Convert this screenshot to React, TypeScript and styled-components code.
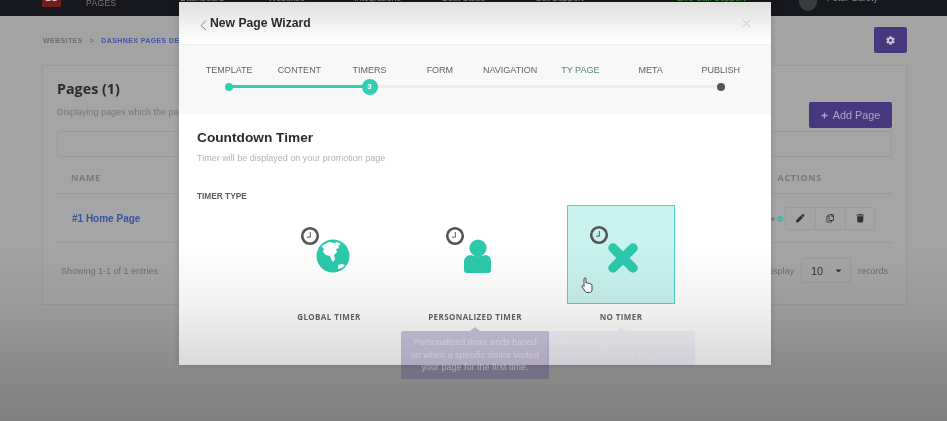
import React from "react";
import styled, { createGlobalStyle } from "styled-components";
import { FaPen, FaTrash, FaCog, FaRegCopy, FaEye, FaCheckCircle, FaCaretDown, FaPlus } from "react-icons/fa";

const Global = createGlobalStyle`
  html, body { margin: 0; padding: 0; background: #8a8a8a; }
  * { box-sizing: border-box; }
`;

const Frame = styled.div`
  position: relative;
  width: 947px;
  height: 421px;
  overflow: hidden;
  background: #a3a3a3;
  font-family: "Liberation Sans", Arial, sans-serif;
  filter: blur(0.45px);
`;

const TopBar = styled.header`
  height: 16px;
  background: #16181d;
  overflow: hidden;
  color: #8b8d92;
  font-size: 9px;
`;
const TopInner = styled.div`
  display: flex;
  align-items: flex-start;
  height: 24px;
  margin-top: -7px;
  padding-left: 42px;
`;
const LogoMark = styled.div`
  width: 19px;
  height: 14px;
  background: #6f1d1d;
  border-radius: 1px;
  color: #d8c8c8;
  font-size: 9px;
  font-weight: 700;
  line-height: 10px;
  text-align: center;
`;
const LogoWord = styled.div`
  margin-left: 25px;
  margin-top: 5px;
  width: 94px;
  font-size: 8.5px;
  line-height: 10px;
  color: #777;
  letter-spacing: 0.4px;
`;
const NavItem = styled.span<{ $w: number; $green?: boolean }>`
  width: ${(p) => p.$w}px;
  line-height: 10px;
  white-space: nowrap;
  color: ${(p) => (p.$green ? "#3f9c3c" : "#8b8d92")};
`;
const Avatar = styled.div`
  width: 18px;
  height: 18px;
  margin-left: 24px;
  border-radius: 50%;
  background: #3a3c40;
`;
const UserName = styled.span`
  margin-left: 10px;
  line-height: 10px;
`;

const CrumbRow = styled.div`
  height: 49px;
  padding: 11px 40px 0 43px;
  display: flex;
  align-items: flex-start;
  justify-content: space-between;
`;
const Crumbs = styled.div`
  margin-top: 9px;
  font-size: 7px;
  line-height: 10px;
  font-weight: 700;
  letter-spacing: 0.4px;
  color: #6f6f6f;
  display: flex;
  gap: 7px;
`;
const CrumbLink = styled.span`
  color: #3f57a6;
`;
const GearButton = styled.div`
  width: 33px;
  height: 26px;
  border-radius: 2px;
  background: #46377f;
  color: #c9c6d8;
  font-size: 9px;
  display: flex;
  align-items: center;
  justify-content: center;
`;

const Card = styled.section`
  margin: 0 40px 0 42px;
  height: 240px;
  padding: 13px 14px 0;
  background: #a5a5a5;
  border: 1px solid #9b9b9b;
`;
const CardTop = styled.div`
  display: flex;
  justify-content: space-between;
  height: 49px;
`;
const PageTitle = styled.h2`
  margin: 0;
  font-family: "Open Sans", sans-serif;
  font-size: 14.3px;
  line-height: 20px;
  font-weight: 700;
  color: #2b2b2b;
`;
const PageSub = styled.p`
  margin: 7px 0 0;
  font-size: 9px;
  line-height: 12px;
  color: #787878;
`;
const AddButton = styled.div`
  margin-top: 23px;
  width: 83px;
  height: 26px;
  border-radius: 2px;
  background: #46377f;
  color: #a9a4c6;
  font-size: 10.8px;
  display: flex;
  align-items: center;
  justify-content: center;
  gap: 5px;
`;
const SearchBox = styled.div`
  margin-top: 3px;
  height: 26px;
  border: 1px solid #9b9b9b;
  border-radius: 2px;
`;
const TableHead = styled.div`
  height: 37px;
  padding: 14px 70px 0 14px;
  display: flex;
  justify-content: space-between;
  border-bottom: 1px solid #9a9a9a;
  font-family: "Open Sans", sans-serif;
  font-size: 9px;
  line-height: 14px;
  font-weight: 700;
  letter-spacing: 0.7px;
  color: #797979;
`;
const TableRow = styled.div`
  height: 49px;
  padding: 1px 17px 0 15px;
  display: flex;
  align-items: center;
  justify-content: space-between;
  border-bottom: 1px solid #9a9a9a;
`;
const RowLink = styled.span`
  font-size: 10px;
  font-weight: 700;
  color: #3b53a4;
`;
const RowActions = styled.div`
  display: flex;
  align-items: center;
`;
const Status = styled.div`
  display: flex;
  gap: 2px;
  margin-right: 2px;
  font-size: 6px;
  color: #777;
`;
const ActionGroup = styled.div`
  display: flex;
  border: 1px solid #9b9b9b;
  border-radius: 2px;
`;
const ActionCell = styled.div`
  width: 29.500px;
  height: 21px;
  font-size: 8.5px;
  color: #333;
  display: flex;
  align-items: center;
  justify-content: center;
  & + & { border-left: 1px solid #9b9b9b; }
`;
const TableFoot = styled.div`
  padding: 15px 4px 0;
  display: flex;
  align-items: center;
  justify-content: space-between;
  font-size: 9px;
  color: #717171;
`;
const Pager = styled.div`
  display: flex;
  align-items: center;
  gap: 7px;
`;
const SelectBox = styled.div`
  width: 50px;
  height: 25px;
  padding: 0 7px 0 9px;
  border: 1px solid #9b9b9b;
  border-radius: 2px;
  display: flex;
  align-items: center;
  justify-content: space-between;
  font-size: 11px;
  color: #333;
`;

const Modal = styled.div`
  position: absolute;
  left: 179px;
  top: 2px;
  width: 592px;
  height: 363px;
  background: #fff;
  box-shadow: 0 0 6px rgba(0, 0, 0, 0.18);
`;
const ModalHead = styled.div`
  height: 43px;
  padding: 0 20px;
  display: flex;
  align-items: center;
  justify-content: space-between;
  background: linear-gradient(#e0e0e0, #fbfbfb 85%, #fff);
  border-bottom: 1px solid #f1f1f1;
`;
const HeadLeft = styled.div`
  display: flex;
  align-items: center;
  gap: 2px;
`;
const BackIcon = styled.svg`
  margin-top: 4px;
`;
const ModalTitle = styled.h1`
  margin: 0;
  font-size: 12.2px;
  line-height: 16px;
  font-weight: 700;
  color: #2a2a2a;
`;
const StepsPanel = styled.div`
  height: 69px;
  padding: 19px 15px 0;
  background: #f8f8f8;
`;
const StepLabels = styled.div`
  display: grid;
  grid-template-columns: repeat(8, 1fr);
`;
const StepLabel = styled.span<{ $accent?: boolean }>`
  text-align: center;
  font-size: 9px;
  line-height: 12px;
  white-space: nowrap;
  color: ${(p) => (p.$accent ? "#4d8a80" : "#636363")};
`;
const Rail = styled.div<{ $pct: number }>`
  margin: 9px 35px 0;
  height: 3px;
  border-radius: 2px;
  display: flex;
  align-items: center;
  justify-content: space-between;
  background: linear-gradient(
    to right,
    #2fcfb4 ${(p) => p.$pct}%,
    #ececec ${(p) => p.$pct}%
  );
`;
const RailSlot = styled.div`
  width: 0;
  height: 0;
  display: flex;
  align-items: center;
  justify-content: center;
`;
const Dot = styled.div<{ $dark?: boolean }>`
  flex: none;
  width: 8px;
  height: 8px;
  border-radius: 50%;
  background: ${(p) => (p.$dark ? "#555" : "#2fcfb4")};
`;
const CurrentDot = styled.div`
  flex: none;
  width: 16px;
  height: 16px;
  border-radius: 50%;
  background: #2fcfb4;
  color: #fff;
  font-size: 8px;
  font-weight: 700;
  display: flex;
  align-items: center;
  justify-content: center;
`;
const ModalBody = styled.div`
  padding: 15px 18px 0;
`;
const SectionTitle = styled.h2`
  margin: 0;
  font-size: 13.7px;
  line-height: 18px;
  font-weight: 700;
  color: #2a2a2a;
`;
const SectionSub = styled.p`
  margin: 5px 0 0;
  font-size: 9px;
  line-height: 12px;
  color: #b2b2b2;
`;
const FieldLabel = styled.div`
  margin-top: 26px;
  font-size: 8.3px;
  line-height: 12px;
  font-weight: 700;
  color: #5c5c5c;
`;
const Options = styled.div`
  margin-top: 3px;
  display: flex;
  justify-content: center;
  gap: 38px;
`;
const Option = styled.div`
  position: relative;
  width: 108px;
`;
const Tile = styled.div<{ $active?: boolean }>`
  height: 99px;
  background: ${(p) => (p.$active ? "#c9f2ee" : "transparent")};
  border: 1px solid ${(p) => (p.$active ? "#4fd6bf" : "transparent")};
  svg { display: block; margin: -1px; }
`;
const OptionLabel = styled.div`
  margin-top: 7px;
  text-align: center;
  font-family: "Open Sans", sans-serif;
  font-size: 8px;
  line-height: 12px;
  font-weight: 700;
  letter-spacing: 0.4px;
  white-space: nowrap;
  color: #666;
`;
const Tooltip = styled.div<{ $faint?: boolean }>`
  position: absolute;
  left: -20px;
  top: 126px;
  width: 148px;
  height: ${(p) => (p.$faint ? 36 : 48)}px;
  padding: 5px 7.500px;
  border-radius: 2px;
  text-align: center;
  font-size: 9px;
  line-height: 12.5px;
  background: ${(p) => (p.$faint ? "rgba(120,100,190,0.08)" : "rgba(80,60,150,0.29)")};
  color: ${(p) => (p.$faint ? "rgba(255,255,255,0.5)" : "rgba(255,255,255,0.55)")};
  &::before {
    content: "";
    position: absolute;
    left: 69px;
    top: -4px;
    border: 5px solid transparent;
    border-top: 0;
    border-bottom: 4px solid ${(p) => (p.$faint ? "rgba(120,100,190,0.08)" : "rgba(80,60,150,0.29)")};
  }
`;
const Vignette = styled.div`
  position: absolute;
  inset: 0;
  pointer-events: none;
  background: linear-gradient(
    rgba(0, 0, 0, 0) 0,
    rgba(0, 0, 0, 0) 58%,
    rgba(0, 0, 0, 0.05) 72%,
    rgba(0, 0, 0, 0.15) 87%,
    rgba(0, 0, 0, 0.22) 100%
  );
`;

const Clock = ({ cx, cy }: { cx: number; cy: number }) => (
  <g>
    <circle cx={cx} cy={cy} r={7.8} fill="none" stroke="#555" strokeWidth={2.6} />
    <path d={`M${cx + 0.3} ${cy - 4}V${cy + 1.2}H${cx - 3}`} fill="none" stroke="#555" strokeWidth={1} />
  </g>
);

const TEAL = "#2cc9ac";

const GlobeIcon = () => (
  <svg width="108" height="99" viewBox="0 0 108 99">
    <Clock cx={35} cy={31} />
    <circle cx={58} cy={51} r={16.5} fill={TEAL} />
    <path
      d="M50 39l4-2 5 1 3-1 4 2-3 2 1 2-3 1 1 3-3 3 1 4-2 3-2-3-1-3-4-1-3-3 1-3-2-2 1-2z"
      fill="#fff"
    />
    <path d="M63 60l4-1 3 1-3 3-4 1z" fill="#fff" />
  </svg>
);

const PersonIcon = () => (
  <svg width="108" height="99" viewBox="0 0 108 99">
    <Clock cx={34} cy={31} />
    <circle cx={57} cy={43} r={8.6} fill={TEAL} />
    <path
      d="M43 57c0-4 3-7 7-7 2 1.500 12 1.500 14 0 4 0 6 3 6 7v8c0 2-1 3-3 3H46c-2 0-3-1-3-3z"
      fill={TEAL}
    />
  </svg>
);

const CrossIcon = () => (
  <svg width="108" height="99" viewBox="0 0 108 99">
    <Clock cx={32} cy={30} />
    <path d="M46 43L66 63M66 43L46 63" stroke={TEAL} strokeWidth={9.5} strokeLinecap="round" />
    <path
      d="M17 74c0-1.500 2-1.500 2 0v4c1-.6 2 0 2 .5 1-.5 2 0 2 .6 1-.3 2 .2 2 1V85c0 1.500-1 2.500-2.500 2.500H20c-1 0-1.500-.6-2-1.500l-3-4c-.6-1 .7-2 1.700-1l.3.400z"
      fill="#fff"
      stroke="#333"
      strokeWidth={0.9}
    />
  </svg>
);

const BackChevron = () => (
  <BackIcon width="9" height="12" viewBox="0 0 9 12">
    <path d="M7 1.500L2 6.500l5 4.500" fill="none" stroke="#8a8a8a" strokeWidth={1} />
  </BackIcon>
);

const CloseGlyph = () => (
  <svg width="9" height="9" viewBox="0 0 9 9">
    <path d="M1 1l7 7M8 1L1 8" stroke="#c8c8c8" strokeWidth={1} />
  </svg>
);

const steps = ["TEMPLATE", "CONTENT", "TIMERS", "FORM", "NAVIGATION", "TY PAGE", "META", "PUBLISH"];
const nav: [string, number, boolean?][] = [
  ["Dashboard", 88],
  ["Websites", 86],
  ["Integrations", 88],
  ["Best Sales", 93],
  ["Get Support", 142],
  ["Live Call Support", 98, true],
];

export default function App() {
  return (
    <Frame>
      <Global />
      <TopBar>
        <TopInner>
          <LogoMark>LG</LogoMark>
          <LogoWord>PAGES</LogoWord>
          {nav.map(([label, w, green]) => (
            <NavItem key={label} $w={w} $green={green}>
              {label}
            </NavItem>
          ))}
          <Avatar />
          <UserName>Peter Garety</UserName>
        </TopInner>
      </TopBar>
      <CrumbRow>
        <Crumbs>
          <span>WEBSITES</span>
          <span>&gt;</span>
          <CrumbLink>DASHNEX PAGES DEMO</CrumbLink>
        </Crumbs>
        <GearButton>
          <FaCog />
        </GearButton>
      </CrumbRow>
      <Card>
        <CardTop>
          <div>
            <PageTitle>Pages (1)</PageTitle>
            <PageSub>Displaying pages which the pages belong to this website</PageSub>
          </div>
          <AddButton>
            <FaPlus size={7} />
            Add Page
          </AddButton>
        </CardTop>
        <SearchBox />
        <TableHead>
          <span>NAME</span>
          <span>ACTIONS</span>
        </TableHead>
        <TableRow>
          <RowLink>#1 Home Page</RowLink>
          <RowActions>
            <Status>
              <FaEye />
              <FaCheckCircle color="#3db8a5" />
            </Status>
            <ActionGroup>
              <ActionCell>
                <FaPen />
              </ActionCell>
              <ActionCell>
                <FaRegCopy />
              </ActionCell>
              <ActionCell>
                <FaTrash />
              </ActionCell>
            </ActionGroup>
          </RowActions>
        </TableRow>
        <TableFoot>
          <span>Showing 1-1 of 1 entries</span>
          <Pager>
            <span>Display</span>
            <SelectBox>
              10
              <FaCaretDown size={9} />
            </SelectBox>
            <span>records</span>
          </Pager>
        </TableFoot>
      </Card>

      <Modal>
        <ModalHead>
          <HeadLeft>
            <BackChevron />
            <ModalTitle>New Page Wizard</ModalTitle>
          </HeadLeft>
          <CloseGlyph />
        </ModalHead>
        <StepsPanel>
          <StepLabels>
            {steps.map((s) => (
              <StepLabel key={s} $accent={s === "TY PAGE"}>
                {s}
              </StepLabel>
            ))}
          </StepLabels>
          <Rail $pct={28.6}>
            {steps.map((s, i) => (
              <RailSlot key={s}>
                {i === 0 && <Dot />}
                {i === 2 && <CurrentDot>3</CurrentDot>}
                {i === 7 && <Dot $dark />}
              </RailSlot>
            ))}
          </Rail>
        </StepsPanel>
        <ModalBody>
          <SectionTitle>Countdown Timer</SectionTitle>
          <SectionSub>Timer will be displayed on your promotion page</SectionSub>
          <FieldLabel>TIMER TYPE</FieldLabel>
          <Options>
            <Option>
              <Tile>
                <GlobeIcon />
              </Tile>
              <OptionLabel>GLOBAL TIMER</OptionLabel>
            </Option>
            <Option>
              <Tile>
                <PersonIcon />
              </Tile>
              <OptionLabel>PERSONALIZED TIMER</OptionLabel>
              <Tooltip>
                Personalized timer ends based on when a specific visitor visited your page for the first time.
              </Tooltip>
            </Option>
            <Option>
              <Tile $active>
                <CrossIcon />
              </Tile>
              <OptionLabel>NO TIMER</OptionLabel>
              <Tooltip $faint>With this option, you won't have a timer on the page.</Tooltip>
            </Option>
          </Options>
        </ModalBody>
      </Modal>
      <Vignette />
    </Frame>
  );
}
